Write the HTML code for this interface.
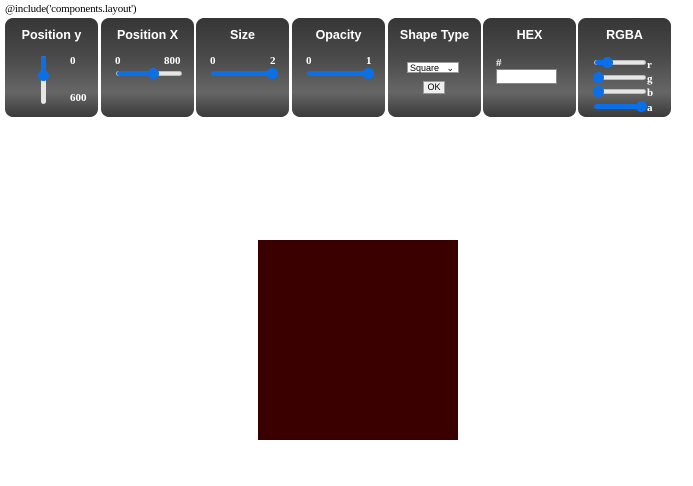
<!DOCTYPE html><html><head><style>
body{margin:0;width:693px;height:486px;background:#fff;position:relative;font-family:"Liberation Serif",serif;overflow:hidden}
.inc{position:absolute;left:5px;top:3px;font-size:11px;color:#000;letter-spacing:-0.2px}
.p{position:absolute;top:18px;width:93px;height:99px;border-radius:8px;background:linear-gradient(#363636 0%,#4a4a4a 40%,#666 75%,#3a3a3a 100%);color:#fff}
.p h{display:block;text-align:center;font:bold 12.5px "Liberation Sans",sans-serif;margin-top:10px}
.t{position:absolute;font-size:11px;font-weight:bold;color:#fff}
.tr{position:absolute;height:5px;border-radius:3px;background:#e6e6e6;border:1px solid #bbb;box-sizing:border-box}
.f{position:absolute;left:0;top:-1px;height:5px;background:#0b6fe8;border-radius:3px}
.k{position:absolute;width:11px;height:11px;border-radius:50%;background:#0b6fe8}
</style></head><body>
<div class="inc">@include('components.layout')</div>

<div class="p" style="left:5px"><h>Position y</h>
<div style="position:absolute;left:36px;top:38px;width:5px;height:48px;background:#e6e6e6;border-radius:3px"></div>
<div style="position:absolute;left:36px;top:38px;width:5px;height:20px;background:#0b6fe8;border-radius:3px"></div>
<div class="k" style="left:33px;top:52px"></div>
<div class="t" style="left:65px;top:37px">0</div><div class="t" style="left:65px;top:74px">600</div></div>

<div class="p" style="left:101px"><h>Position X</h>
<div class="t" style="left:14px;top:37px">0</div><div class="t" style="left:63px;top:37px">800</div>
<div class="tr" style="left:15px;top:53px;width:66px"><div class="f" style="width:38px"></div></div>
<div class="k" style="left:47px;top:50px"></div></div>

<div class="p" style="left:196px"><h>Size</h>
<div class="t" style="left:14px;top:37px">0</div><div class="t" style="left:74px;top:37px">2</div>
<div class="tr" style="left:15px;top:53px;width:66px;background:#0b6fe8;border:0"></div>
<div class="k" style="left:71px;top:50px"></div></div>

<div class="p" style="left:292px"><h>Opacity</h>
<div class="t" style="left:14px;top:37px">0</div><div class="t" style="left:74px;top:37px">1</div>
<div class="tr" style="left:15px;top:53px;width:66px;background:#0b6fe8;border:0"></div>
<div class="k" style="left:71px;top:50px"></div></div>

<div class="p" style="left:388px"><h>Shape Type</h>
<div style="position:absolute;left:19px;top:44px;width:52px;height:11px;background:#fff;border:1px solid #999;font:9px 'Liberation Sans',sans-serif;color:#000;line-height:11px;padding-left:2px;box-sizing:border-box">Square&nbsp;&nbsp;&nbsp;⌄</div>
<div style="position:absolute;left:35px;top:63px;width:22px;height:13px;background:#efefef;border:1px solid #999;box-sizing:border-box;font:9px 'Liberation Sans',sans-serif;color:#000;text-align:center;line-height:11px">OK</div></div>

<div class="p" style="left:483px"><h>HEX</h>
<div class="t" style="left:13px;top:39px">#</div>
<div style="position:absolute;left:13px;top:51px;width:61px;height:15px;background:#fff;border:1px solid #888;box-sizing:border-box"></div></div>

<div class="p" style="left:578px"><h>RGBA</h>
<div class="tr" style="left:16px;top:42px;width:52px"><div class="f" style="width:14px"></div></div><div class="k" style="left:24px;top:39px"></div><div class="t" style="left:69px;top:41px">r</div>
<div class="tr" style="left:16px;top:57px;width:52px"></div><div class="k" style="left:15px;top:54px"></div><div class="t" style="left:69px;top:55px">g</div>
<div class="tr" style="left:16px;top:71px;width:52px"></div><div class="k" style="left:15px;top:68px"></div><div class="t" style="left:69px;top:69px">b</div>
<div class="tr" style="left:16px;top:86px;width:52px;background:#0b6fe8;border:0"></div><div class="k" style="left:58px;top:83px"></div><div class="t" style="left:69px;top:84px">a</div></div>

<div style="position:absolute;left:258px;top:240px;width:200px;height:200px;background:#3a0000"></div>
</body></html>
